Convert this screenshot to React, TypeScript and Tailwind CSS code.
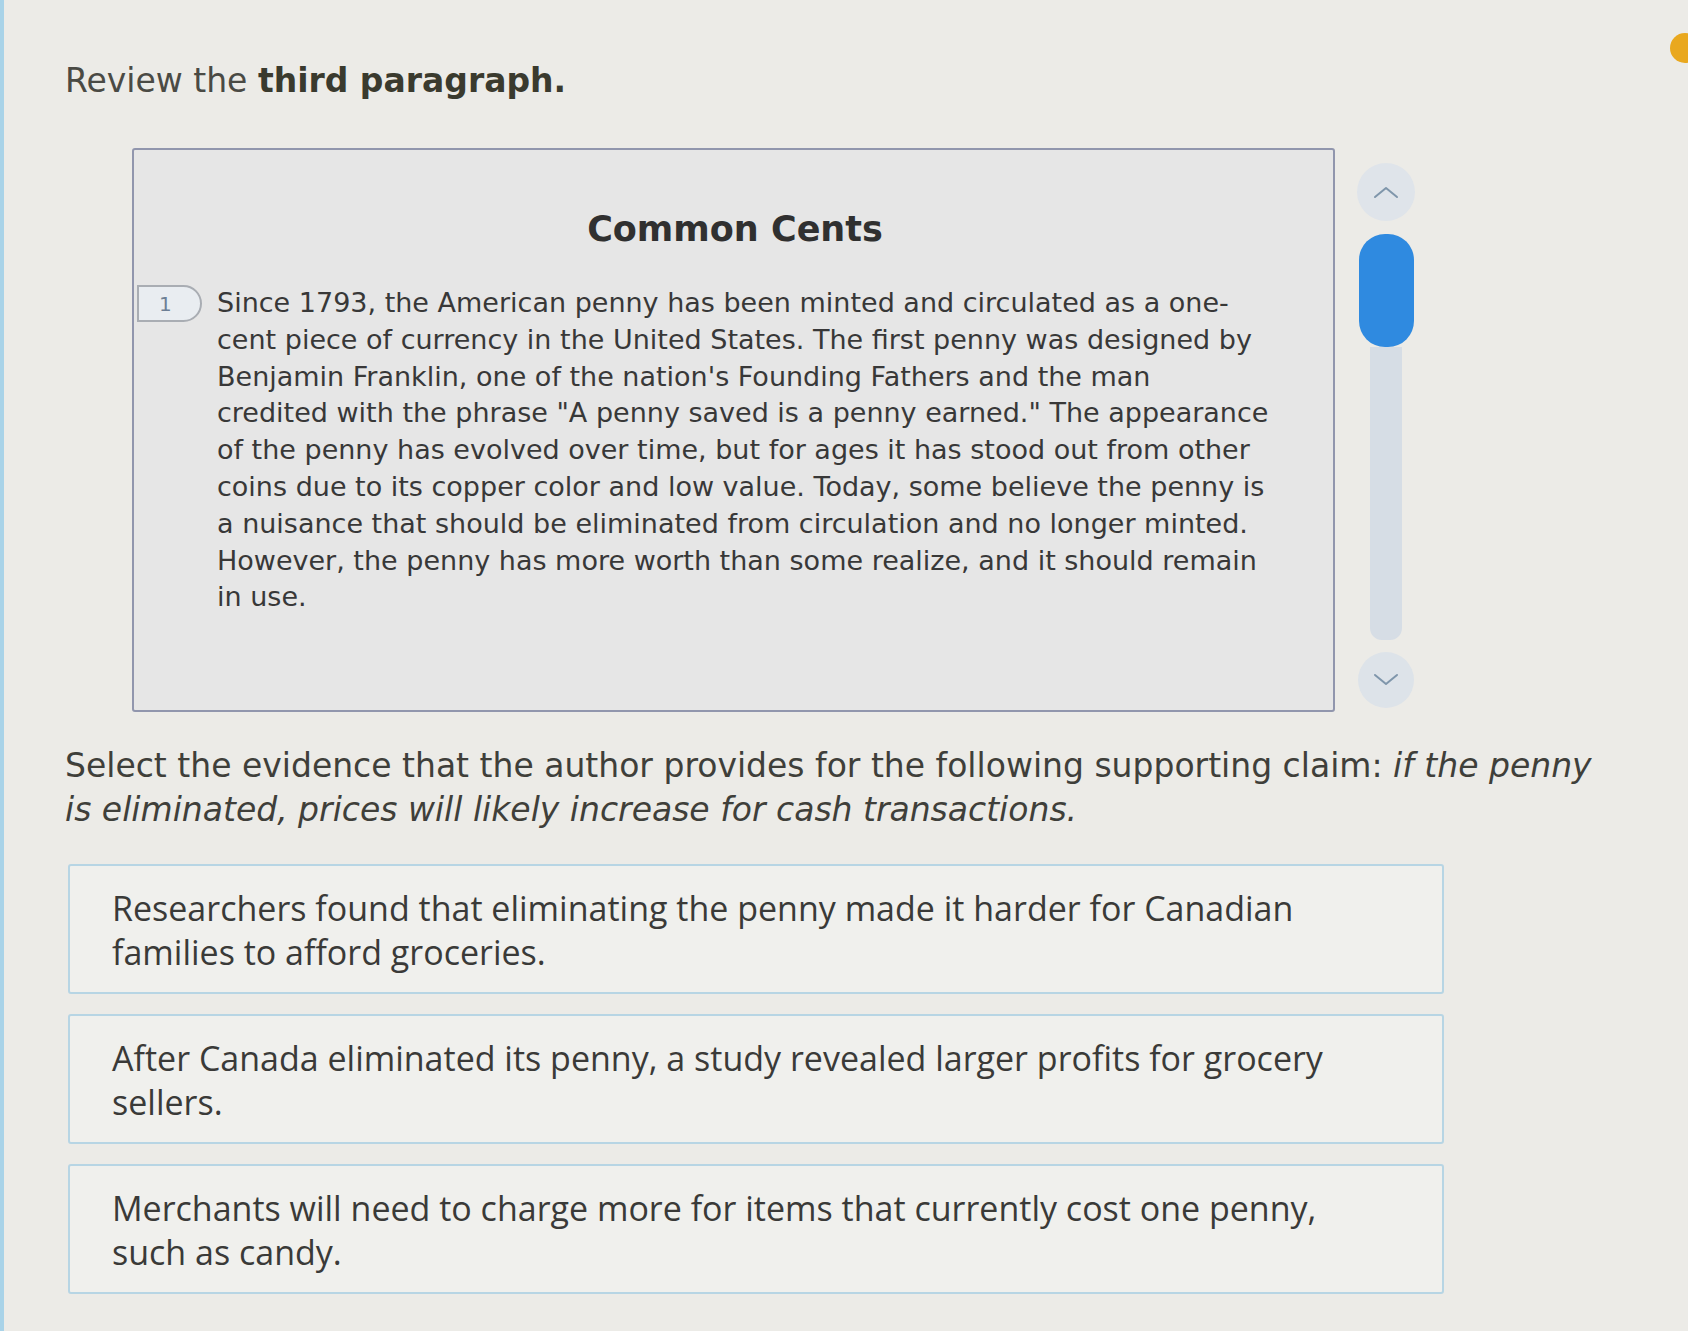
import React from "react";

const passageLines = [
  "Since 1793, the American penny has been minted and circulated as a one-",
  "cent piece of currency in the United States. The first penny was designed by",
  "Benjamin Franklin, one of the nation's Founding Fathers and the man",
  'credited with the phrase "A penny saved is a penny earned." The appearance',
  "of the penny has evolved over time, but for ages it has stood out from other",
  "coins due to its copper color and low value. Today, some believe the penny is",
  "a nuisance that should be eliminated from circulation and no longer minted.",
  "However, the penny has more worth than some realize, and it should remain",
  "in use.",
];

const options = [
  [
    "Researchers found that eliminating the penny made it harder for Canadian",
    "families to afford groceries.",
  ],
  [
    "After Canada eliminated its penny, a study revealed larger profits for grocery",
    "sellers.",
  ],
  [
    "Merchants will need to charge more for items that currently cost one penny,",
    "such as candy.",
  ],
];

function Chevron({ up }: { up?: boolean }) {
  return (
    <svg width="26" height="14" viewBox="0 0 26 14" fill="none">
      <path
        d={up ? "M2 12 L13 3 L24 12" : "M2 2 L13 11 L24 2"}
        stroke="#7f96ab"
        strokeWidth="2"
        strokeLinecap="round"
        strokeLinejoin="round"
      />
    </svg>
  );
}

function Scrollbar() {
  return (
    <div className="ml-[21px] mt-[15px] flex w-[60px] flex-col items-center">
      <button className="flex h-[58px] w-[58px] items-center justify-center rounded-full bg-[#dfe4ea]">
        <Chevron up />
      </button>
      <div className="mt-[13px] flex flex-col items-center">
        <div className="h-[113px] w-[55px] rounded-[26px] bg-[#2f8ae0]" />
        <div className="h-[293px] w-[32px] rounded-b-[12px] bg-[#d6dde5]" />
      </div>
      <button className="mt-[12px] flex h-[56px] w-[56px] items-center justify-center rounded-full bg-[#dde3e9]">
        <Chevron />
      </button>
    </div>
  );
}

export default function App() {
  return (
    <div
      className="relative h-[1331px] w-[1688px] overflow-hidden border-l-4 border-[#a9d3e8] bg-[#ecebe7] pl-[61px] text-[#3c3c3a]"
      style={{ fontFamily: '"DejaVu Sans", Verdana, sans-serif' }}
    >
      <div className="absolute right-[-12px] top-[33px] h-[30px] w-[30px] rounded-full bg-[#e9a81f]" />

      <h1 className="pt-[59px] text-[33px] leading-[44px] text-[#4a4a44]">
        Review the <span className="font-bold text-[#3a3a2e]">third paragraph.</span>
      </h1>

      <div className="mt-[45px] flex">
        <div className="ml-[67px] h-[564px] w-[1203px] rounded-[3px] border-2 border-[#9196ad] bg-[#e6e6e6] pl-[3px]">
          <h2 className="pt-[57px] text-center text-[35px] font-bold leading-[44px] text-[#303030]">
            Common Cents
          </h2>
          <div className="mt-[34px] flex">
            <div className="flex h-[37px] w-[65px] shrink-0 items-center rounded-r-full border-2 border-[#a9adb3] bg-[#e9edf1] pl-[20px] text-[20px] text-[#6d7f95]">
              1
            </div>
            <div className="ml-[15px] text-[27px] leading-[36.8px] text-[#383838]">
              {passageLines.map((l, i) => (
                <div key={i} className="whitespace-nowrap">
                  {l}
                </div>
              ))}
            </div>
          </div>
        </div>
        <Scrollbar />
      </div>

      <p className="mt-[32px] text-[33px] leading-[44px] text-[#3f3f3a]">
        <span className="block whitespace-nowrap">
          Select the evidence that the author provides for the following supporting claim:{" "}
          <em>if the penny</em>
        </span>
        <em className="block whitespace-nowrap">
          is eliminated, prices will likely increase for cash transactions.
        </em>
      </p>

      <div className="mt-[32px] flex w-[1376px] flex-col gap-[20px] pl-[3px]">
        {options.map((lines, i) => (
          <div
            key={i}
            role="button"
            className="h-[130px] w-[1376px] cursor-pointer rounded-[3px] border-2 border-[#b7d5e4] bg-[#f0f0ed] pl-[42px] pt-[20px] text-left text-[34px] leading-[44px] text-[#3a3a38]"
            style={{ fontFamily: '"Open Sans", sans-serif' }}
          >
            {lines.map((l, j) => (
              <span key={j} className="block whitespace-nowrap">
                {l}
              </span>
            ))}
          </div>
        ))}
      </div>
    </div>
  );
}
